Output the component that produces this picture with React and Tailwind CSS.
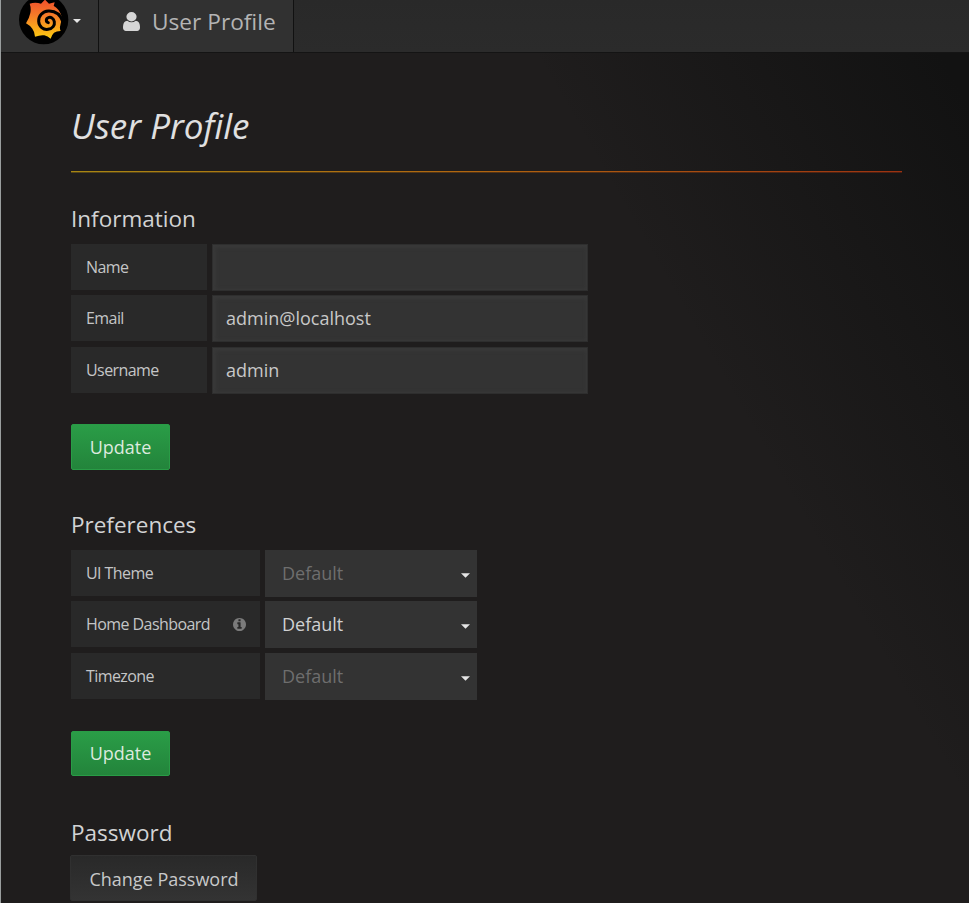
import React from "react";

function UserIcon() {
  return (
    <svg viewBox="0 128 1280 1536" className="h-[19px] w-[17px]" fill="#d5d5d5" preserveAspectRatio="none">
      <path d="M1280 1399q0 109-62.5 187t-150.5 78h-854q-88 0-150.5-78t-62.5-187q0-85 8.5-160.5t31.5-152 58.5-131 94-89 134.5-34.5q131 128 313 128t313-128q76 0 134.5 34.5t94 89 58.5 131 31.5 152 8.5 160.5zm-256-887q0 159-112.5 271.5t-271.5 112.5-271.5-112.5-112.5-271.5 112.5-271.5 271.5-112.5 271.5 112.5 112.5 271.5z" />
    </svg>
  );
}

function InfoIcon() {
  return (
    <svg viewBox="0 128 1536 1536" className="size-[13px]" fill="#7b7b7b">
      <path d="M1024 1376v-160q0-14-9-23t-23-9h-96v-512q0-14-9-23t-23-9h-320q-14 0-23 9t-9 23v160q0 14 9 23t23 9h96v320h-96q-14 0-23 9t-9 23v160q0 14 9 23t23 9h448q14 0 23-9t9-23zm-128-896v-160q0-14-9-23t-23-9h-192q-14 0-23 9t-9 23v160q0 14 9 23t23 9h192q14 0 23-9t9-23zm640 416q0 209-103 385.5t-279.5 279.5-385.5 103-385.5-103-279.5-279.5-103-385.5 103-385.5 279.5-279.5 385.5-103 385.5 103 279.5 279.5 103 385.5z" />
    </svg>
  );
}

function Logo() {
  return (
    <svg viewBox="0 0 168 138" className="-ml-[2px] h-[46px] w-[56px] shrink-0">
      <defs>
        <linearGradient id="flame" x1="0" y1="0" x2="0" y2="1">
          <stop offset="0" stopColor="#f0502c" />
          <stop offset="0.4" stopColor="#f57b28" />
          <stop offset="1" stopColor="#fccc10" />
        </linearGradient>
      </defs>
      <circle cx="83" cy="59" r="74" fill="#000" />
      <path
        fill="url(#flame)"
        d="M138 54C134 35 124 24 113 18L116 7L99 11L87 -1L75 11Q58 6 41 11Q46 25 43 39Q40 54 30 70Q44 78 49 86Q56 95 57 110Q74 104 85 106Q95 108 104 116Q109 102 114 98Q121 93 134 93Q130 84 133 76Q134 70 138 54Z"
      />
      <path
        fill="none"
        stroke="#000"
        strokeWidth="9"
        strokeLinecap="round"
        d="M141 66C133 42 116 32 97 33C80 34 67 48 68 64C69 80 82 90 96 88C110 86 117 76 115 65C113 54 104 50 97 53C89 56 89 66 97 68"
      />
    </svg>
  );
}

function Caret({ className }) {
  return (
    <svg viewBox="0 0 10 5" className={className} fill="#e6e6e6">
      <path d="M0 0h10L5 5z" />
    </svg>
  );
}

function Heading({ children }) {
  return <h3 className="text-[22.5px] leading-[30px] text-[#d2d3d4]">{children}</h3>;
}

function InputRow({ label, value, top }) {
  return (
    <div className={`flex items-start ${top}`}>
      <div className="mr-[5px] flex h-[46px] w-[136px] items-center bg-[#292929] pl-[15px] text-[16px] tracking-[-0.57px] text-[#c4c5c6]">
        {label}
      </div>
      <div className="flex h-[47px] w-[376px] items-center border border-[#2e2e2e] bg-[#333333] pl-[13px] text-[18px] text-[#c8c8c8] shadow-[inset_1px_1px_4px_1px_#3a3a3a]">
        {value}
      </div>
    </div>
  );
}

function SelectRow({ label, color, top, info }) {
  return (
    <div className={`flex items-start ${top}`}>
      <div className="mr-[5px] flex h-[46px] w-[189px] items-center justify-between bg-[#292929] pr-[14px] pl-[15px] text-[16px] tracking-[-0.57px] text-[#c4c5c6]">
        {label}
        {info && <InfoIcon />}
      </div>
      <div className={`flex h-[47px] w-[212px] items-center justify-between bg-[#333333] pr-[7px] pl-[17px] text-[18px] ${color}`}>
        Default
        <Caret className="mt-[3px] h-[5px] w-[9px]" />
      </div>
    </div>
  );
}

function UpdateButton({ className }) {
  return (
    <button className={`block w-[99px] rounded-[2px] border border-[#299c46] bg-linear-to-b from-[#2a9d47] to-[#23843b] text-[18px] text-[#dceade] ${className}`}>
      Update
    </button>
  );
}

export default function App() {
  return (
    <div className="flex h-[903px] w-[969px] flex-col overflow-hidden border-l border-[#9a9e9e] bg-[#1f1d1d] font-['Open_Sans','Noto_Sans',sans-serif]">
      <nav className="flex h-[53px] shrink-0 border-b border-[#141414] bg-linear-to-b from-[#292929] to-[#2b2b2b]">
        <div className="flex w-[98px] shrink-0 items-start border-r border-[#111] bg-[#323232] pl-[17px]">
          <Logo />
          <Caret className="mt-[19px] ml-[1px] h-[4px] w-[8px] shrink-0" />
        </div>
        <div className="flex w-[195px] shrink-0 items-start border-r border-[#111] bg-[#313131] pl-[24px]">
          <div className="mt-[12px]"><UserIcon /></div>
          <span className="mt-[7px] ml-[12px] text-[22.7px] leading-[30px] whitespace-nowrap text-[#b4b4b4]">User Profile</span>
        </div>
      </nav>
      <main className="h-[850px] bg-[linear-gradient(60deg,transparent_70%,#121212_98%)] pr-[67px] pl-[70px]">
        <h1 className="pt-[49px] text-[35px] leading-[48px] text-[#e0e0e0] italic">User Profile</h1>
        <div className="mt-[21px] h-[1px] bg-linear-to-r from-[#a88612] via-[#b0640f] to-[#9c3210]" />
        <div className="h-[1px] bg-linear-to-r from-[#54461a] to-[#4c1f13]" />

        <section className="pt-[31px]">
          <Heading>Information</Heading>
          <InputRow label="Name" value="" top="mt-[10px]" />
          <InputRow label="Email" value="admin@localhost" top="mt-[4px]" />
          <InputRow label="Username" value="admin" top="mt-[5px]" />
          <UpdateButton className="mt-[30px] h-[46px]" />
        </section>

        <section className="pt-[40px]">
          <Heading>Preferences</Heading>
          <SelectRow label="UI Theme" color="text-[#6e6e6e]" top="mt-[10px]" />
          <SelectRow label="Home Dashboard" color="text-[#d0d1d2]" top="mt-[4px]" info />
          <SelectRow label="Timezone" color="text-[#6e6e6e]" top="mt-[5px]" />
          <UpdateButton className="mt-[31px] h-[45px]" />
        </section>

        <section className="pt-[42px]">
          <Heading>Password</Heading>
          <button className="mt-[7px] -ml-px block h-[46px] w-[187px] rounded-[2px] border border-[#303030] bg-linear-to-b from-[#292929] to-[#333333] pt-[2px] pl-[1px] text-[18px] whitespace-nowrap text-[#c8c9ca]">
            Change Password
          </button>
        </section>
      </main>
    </div>
  );
}
